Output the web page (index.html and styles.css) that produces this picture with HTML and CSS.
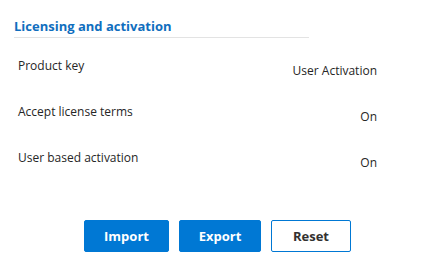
FILE: index.html
```html
<!DOCTYPE html>
<html lang="en">
<head>
<meta charset="UTF-8">
<meta name="viewport" content="width=device-width, initial-scale=1.0">
<title>Licensing and activation</title>
<link rel="stylesheet" href="styles.css">
</head>
<body>
  <div class="panel">
    <h2 class="section-title">Licensing and activation</h2>
    <div class="settings">
      <div class="row">
        <span class="label">Product key</span>
        <span class="value">User Activation</span>
      </div>
      <div class="row">
        <span class="label">Accept license terms</span>
        <span class="value">On</span>
      </div>
      <div class="row">
        <span class="label">User based activation</span>
        <span class="value">On</span>
      </div>
    </div>
    <div class="actions">
      <button class="btn primary import">Import</button>
      <button class="btn primary export">Export</button>
      <button class="btn secondary reset">Reset</button>
    </div>
  </div>
</body>
</html>
```

FILE: styles.css
```css
body {
  margin: 0;
  font-family: "Open Sans", "Noto Sans", sans-serif;
  background-color: #fff;
  color: #262626;
}
.panel {
  padding: 17px 0 0 14px;
}
.section-title {
  width: 295px;
  margin: 0;
  padding-bottom: 2px;
  font-size: 13px;
  font-weight: bold;
  line-height: 18px;
  color: #106ebe;
  border-bottom: 1px solid #e3e3e3;
}
.settings {
  width: 359px;
  margin: 20px 0 0 4px;
}
.row {
  display: flex;
  justify-content: space-between;
  height: 46px;
  font-size: 12px;
  line-height: 16px;
}
.value {
  padding-top: 5px;
}
.actions {
  display: flex;
  gap: 10px;
  margin: 24px 0 0 70px;
}
.btn {
  height: 32px;
  padding: 0;
  border-radius: 2px;
  font-family: "Open Sans", "Noto Sans", sans-serif;
  font-size: 13px;
  font-weight: bold;
  cursor: pointer;
}
.import {
  width: 85px;
}
.export {
  width: 82px;
}
.reset {
  width: 80px;
}
.primary {
  background-color: #0078d4;
  border: 1px solid #0078d4;
  color: #fff;
}
.secondary {
  background-color: #fff;
  border: 1px solid #0078d4;
  color: #323130;
}
```
